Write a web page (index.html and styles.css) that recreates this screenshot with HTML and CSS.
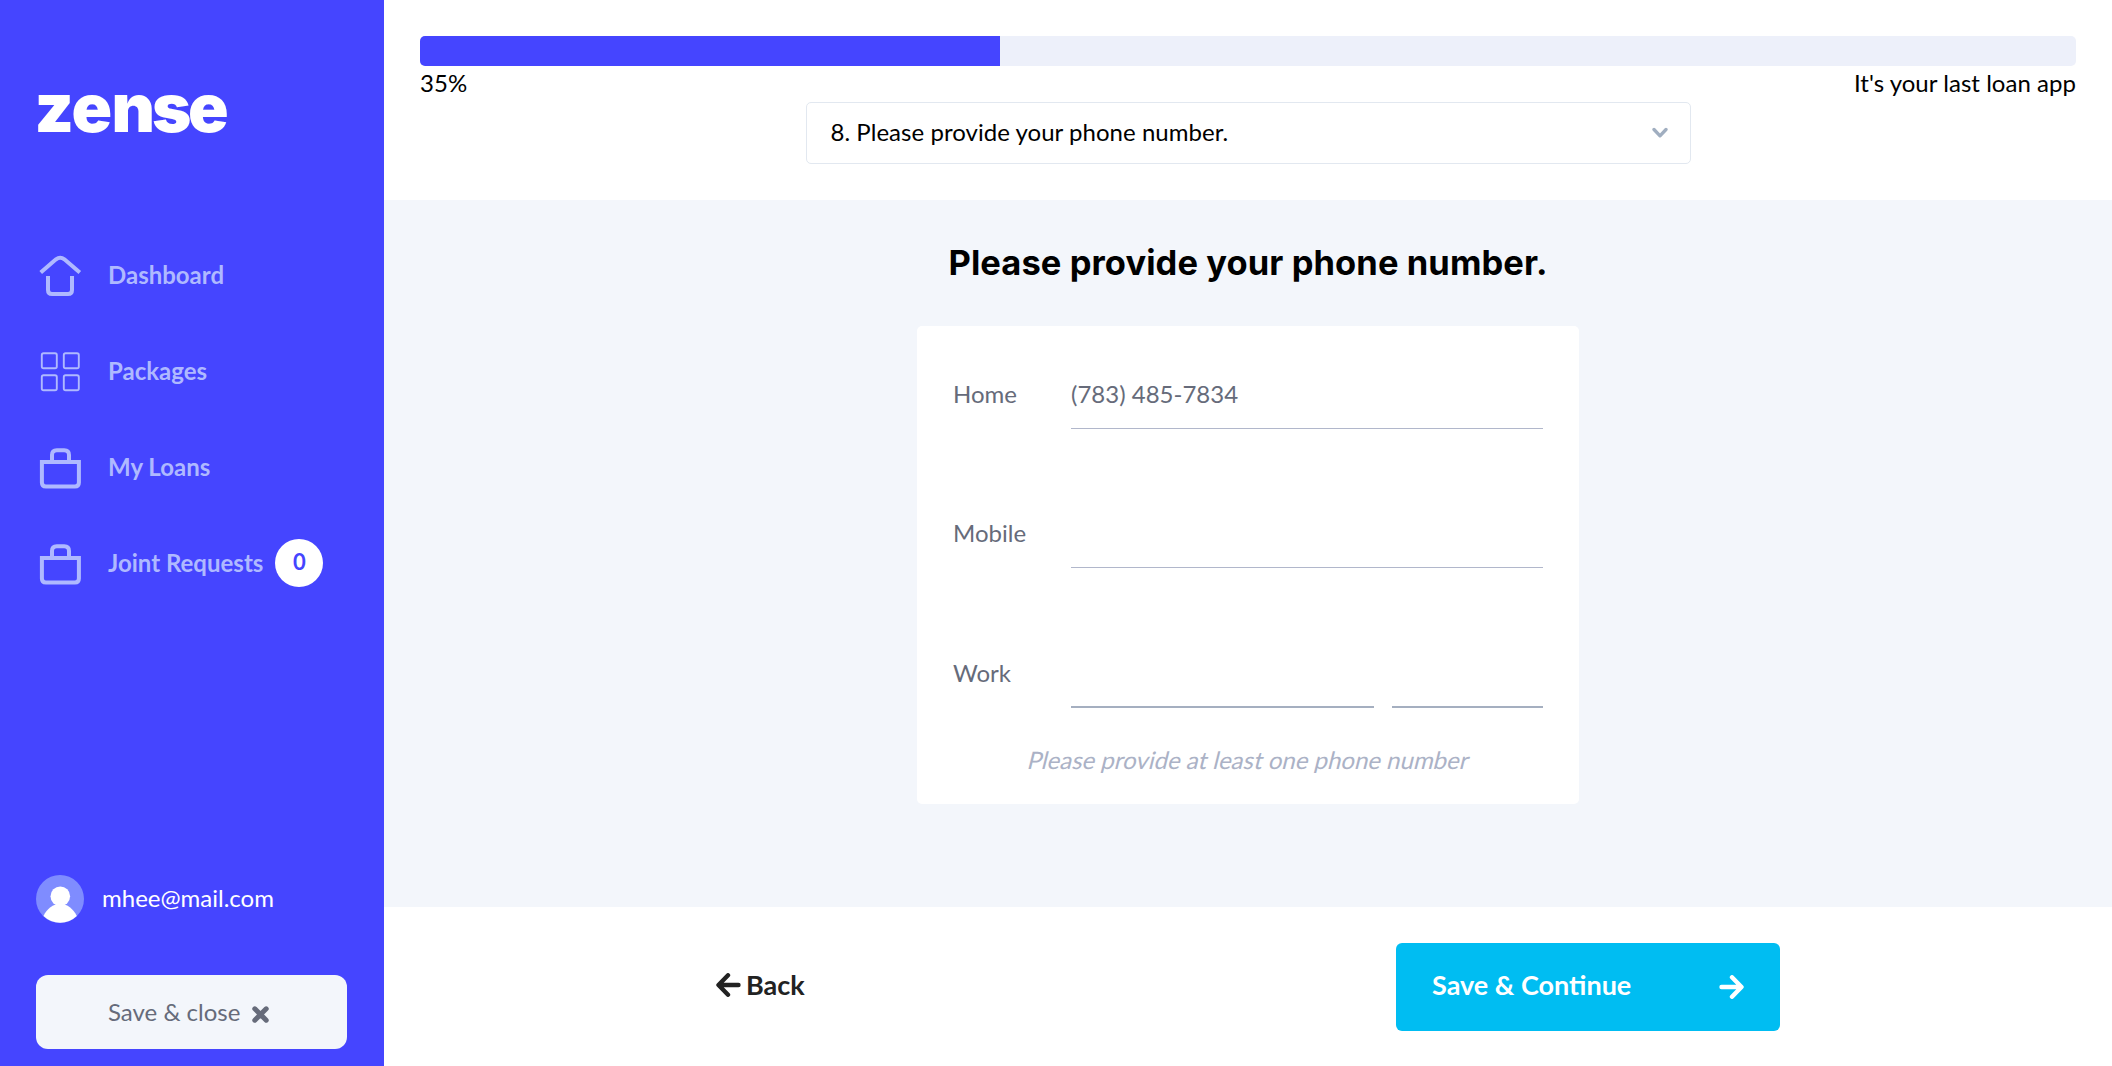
FILE: index.html
```html
<!DOCTYPE html>
<html lang="en">
<head>
<meta charset="utf-8">
<title>Zense</title>
<link rel="stylesheet" href="styles.css">
</head>
<body>
<div class="app">
  <aside class="sidebar">
    <svg class="logo" width="200" height="60" viewBox="0 0 200 60" role="img" aria-label="zense"><text class="logo-text" x="-1.500 35.500 75.500 116 152" y="49">zense</text></svg>
    <nav class="nav">
      <a class="nav-item">
        <svg class="nav-icon" viewBox="0 0 48 48"><path d="M4.7 21.6 20 8.3q4.2-3.2 8.4 0L43.8 21.6M12 25v14q0 4 4 4h16q4 0 4-4V25"/></svg>
        <span>Dashboard</span>
      </a>
      <a class="nav-item">
        <svg class="nav-icon thin" viewBox="0 0 48 48"><rect x="5.8" y="6.2" width="15" height="15" rx="1.8"/><rect x="27.8" y="6.2" width="15" height="15" rx="1.8"/><rect x="5.8" y="28.2" width="15" height="15" rx="1.8"/><rect x="27.8" y="28.2" width="15" height="15" rx="1.8"/></svg>
        <span>Packages</span>
      </a>
      <a class="nav-item">
        <svg class="nav-icon" viewBox="0 0 48 48"><path d="M5.900 19h37v20.500q0 4-4 4h-29q-4 0-4-4zM16 19v-7q0-4.800 4.800-4.800h7.400q4.800 0 4.800 4.800v7"/></svg>
        <span>My Loans</span>
      </a>
      <a class="nav-item">
        <svg class="nav-icon" viewBox="0 0 48 48"><path d="M5.900 19h37v20.500q0 4-4 4h-29q-4 0-4-4zM16 19v-7q0-4.800 4.800-4.800h7.400q4.800 0 4.800 4.800v7"/></svg>
        <span>Joint Requests</span>
        <span class="count">0</span>
      </a>
    </nav>
    <div class="user">
      <svg class="avatar" viewBox="0 0 48 48"><circle cx="24" cy="24" r="24" fill="#7f8cff"/><circle cx="24.300" cy="21.300" r="9.800" fill="#fff"/><path d="M7.500 41C11 33.500 17 29 24.200 29S37 33.500 40.800 41A24 24 0 0 1 7.500 41z" fill="#fff"/></svg>
      <span>mhee@mail.com</span>
    </div>
    <button class="close-btn">Save &amp; close
      <svg width="17" height="17" viewBox="0 0 17 17"><path d="M2.800 2.800 14.200 14.200M14.200 2.800 2.800 14.200" fill="none" stroke="#666b7a" stroke-width="5" stroke-linecap="round"/></svg>
    </button>
  </aside>
  <div class="page">
    <header class="header">
      <div class="progress"><div class="progress-fill" style="width:35%"></div></div>
      <div class="progress-labels"><span>35%</span><span>It's your last loan app</span></div>
      <div class="select">
        <span>8. Please provide your phone number.</span>
        <svg width="16" height="12" viewBox="0 0 16 12"><path d="M2 2.500 8 8.800 14 2.500" fill="none" stroke="#a0aec0" stroke-width="3.300" stroke-linecap="round" stroke-linejoin="round"/></svg>
      </div>
    </header>
    <main class="main">
      <h1 class="title">Please provide your phone number.</h1>
      <form class="card">
        <label class="row"><span class="label">Home</span><span class="field">(783) 485-7834</span></label>
        <label class="row"><span class="label">Mobile</span><span class="field"></span></label>
        <label class="row"><span class="label">Work</span><span class="field thick"></span><span class="field thick ext"></span></label>
        <p class="note">Please provide at least one phone number</p>
      </form>
    </main>
    <footer class="footer">
      <a class="back"><svg width="25" height="24" viewBox="0 0 25 24"><path d="M12 2.300 2.500 12 12 21.700M3 12H22.500" fill="none" stroke="#222" stroke-width="4.400" stroke-linecap="round" stroke-linejoin="round"/></svg><span>Back</span></a>
      <button class="continue"><span>Save &amp; Continue</span><svg width="25" height="24" viewBox="0 0 25 24"><path d="M13 2.300 22.500 12 13 21.700M22 12H2.500" fill="none" stroke="#fff" stroke-width="4.400" stroke-linecap="round" stroke-linejoin="round"/></svg></button>
    </footer>
  </div>
</div>
</body>
</html>
```

FILE: styles.css
```css
* { box-sizing: border-box; }
body {
  margin: 0;
  font: 24px/36px Lato, "Open Sans", sans-serif;
  color: #000;
}
button { font: inherit; border: 0; }
svg { display: block; flex: none; }
.app { display: flex; height: 1066px; }

.sidebar {
  width: 384px;
  flex: none;
  display: flex;
  flex-direction: column;
  padding: 83px 37px 17px 36px;
  background: #4545ff;
}
.logo { overflow: visible; }
.logo-text {
  font-family: Inter, sans-serif;
  font-weight: 900;
  font-size: 67px;
  fill: #fff;
}
.nav {
  display: flex;
  flex-direction: column;
  gap: 48px;
  margin-top: 108px;
}
.nav-item {
  display: flex;
  align-items: center;
  height: 48px;
  font-weight: 700;
  color: #afb9ff;
}
.nav-icon {
  width: 48px;
  height: 48px;
  margin-right: 24px;
  fill: none;
  stroke: #afb9ff;
  stroke-width: 4;
}
.nav-icon.thin { stroke-width: 1.9; }
.count {
  width: 48px;
  height: 48px;
  margin-left: 12px;
  border-radius: 50%;
  background: #fff;
  color: #4545ff;
  font-size: 22px;
  line-height: 45px;
  text-align: center;
}
.user {
  display: flex;
  gap: 18px;
  margin-top: auto;
  color: #fff;
}
.user span { line-height: 46px; }
.avatar { width: 48px; height: 48px; }
.close-btn {
  display: flex;
  align-items: center;
  gap: 12px;
  height: 74px;
  margin-top: 52px;
  padding: 0 72px;
  border-radius: 12px;
  background: #f3f6fb;
  color: #666b7a;
}
.close-btn svg { margin-top: 4px; }

.page { flex: 1; display: flex; flex-direction: column; }
.header { height: 200px; padding: 36px 36px 0; letter-spacing: 0.035px; }
.progress {
  height: 30px;
  border-radius: 5px;
  overflow: hidden;
  background: #edf0fa;
}
.progress-fill { height: 100%; background: #4545ff; }
.progress-labels {
  display: flex;
  justify-content: space-between;
  line-height: 33px;
}
.select {
  display: flex;
  align-items: center;
  justify-content: space-between;
  width: 885px;
  height: 62px;
  margin: 3px auto 0;
  padding: 0 22px 2px 24px;
  border: 1px solid #e2e8f0;
  border-radius: 5px;
}
.select svg { margin-top: 2px; }

.main {
  flex: none;
  height: 707px;
  display: flex;
  flex-direction: column;
  align-items: center;
  padding-top: 36px;
  background: #f3f6fb;
}
.title {
  margin: 0 0 36px;
  font: 700 34.5px/54px Inter, sans-serif;
  letter-spacing: 0.08px;
  white-space: nowrap;
}
.card {
  width: 662px;
  height: 478px;
  padding: 31px 36px 0;
  border-radius: 5px;
  background: #fff;
  color: #666b7a;
}
.row { display: flex; height: 72px; margin-bottom: 67px; line-height: 73px; }
.row:nth-child(3) { margin: 68px 0 34px; }
.label { width: 118px; flex: none; }
.field { flex: 1; border-bottom: 1px solid #b1b7cb; }
.field.thick { border-bottom: 2px solid #a5afc0; }
.field.ext { flex: none; width: 151px; margin-left: 18px; }
/* slanted upright face, wider than the true italic */
.note {
  margin: 0 0 0 2px;
  text-align: center;
  color: #abb2c6;
  transform: skewX(-14deg);
}

.footer {
  flex: 1;
  display: flex;
  justify-content: space-between;
  padding: 36px 332px 0;
  font-size: 27px;
  font-weight: 700;
}
.back {
  display: flex;
  align-items: center;
  gap: 5px;
  height: 84px;
  color: #222;
}
.continue {
  display: flex;
  align-items: center;
  justify-content: space-between;
  width: 384px;
  height: 88px;
  padding: 0 36px 4px 36px;
  border-radius: 6px;
  background: #00bdf2;
  color: #fff;
}
.continue svg { margin-top: 4px; }
```
